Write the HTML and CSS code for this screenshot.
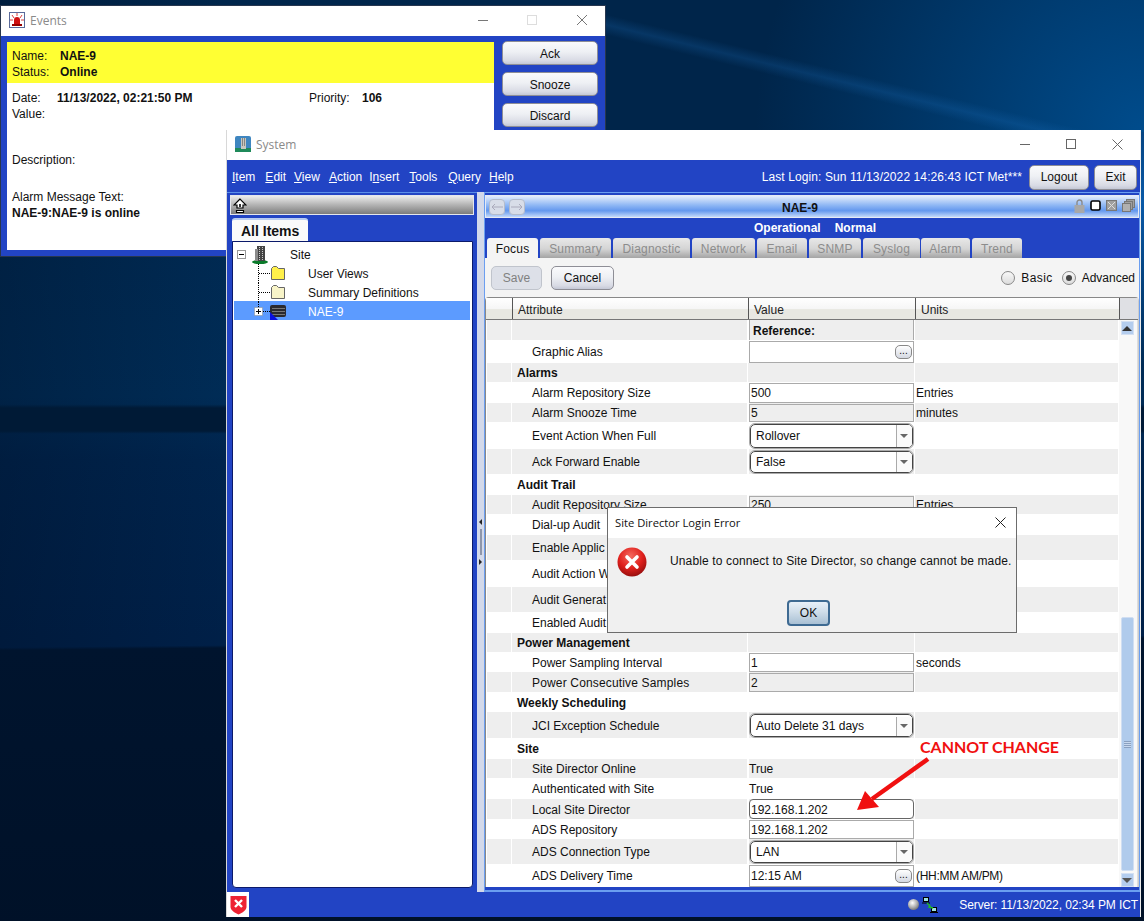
FILE: index.html
```html
<!DOCTYPE html>
<html lang="en">
<head>
    <meta charset="UTF-8">
    <title>Events / System</title>
    <link rel="stylesheet" href="styles.css">
</head>
<body>
<div class="desktop">

    <!-- Events window -->
    <div class="window events">
        <div class="titlebar">
            <svg class="title-icon" width="16" height="16" viewBox="0 0 16 16">
                <rect x="0.5" y="0.5" width="15" height="15" fill="#fff" stroke="#5a6a9a"/>
                <path d="M8 1v3M3 3l2 3M13 3l-2 3M1 8h3M15 8h-3" stroke="#d84040" stroke-width="1"/>
                <path d="M5 13V8a3 3 0 0 1 6 0v5z" fill="#d01010"/>
                <rect x="3" y="12" width="10" height="2" fill="#900"/>
            </svg>
            <span class="title-text">Events</span>
            <div class="win-controls ev-controls">
                <svg width="10" height="10" viewBox="0 0 10 10"><path d="M0 5.5h10" stroke="#777"/></svg>
                <svg width="10" height="10" viewBox="0 0 10 10"><rect x="0.5" y="0.5" width="9" height="9" fill="none" stroke="#ddd"/></svg>
                <svg width="12" height="12" viewBox="0 0 12 12"><path d="M1 1l10 10M11 1L1 11" stroke="#777"/></svg>
            </div>
        </div>
        <div class="events-body">
            <div class="event-info">
                <div class="event-head">
                    <div class="ev-line"><span class="ev-label">Name:</span><b>NAE-9</b></div>
                    <div class="ev-line"><span class="ev-label">Status:</span><b>Online</b></div>
                </div>
                <div class="event-detail">
                    <div class="ev-line">
                        <span class="ev-date-label">Date:</span><b class="ev-date">11/13/2022, 02:21:50 PM</b><span class="ev-prio-label">Priority:</span><b>106</b>
                    </div>
                    <div class="ev-line">Value:</div>
                    <div class="ev-line ev-desc">Description:</div>
                    <div class="ev-line ev-msg">Alarm Message Text:</div>
                    <div class="ev-line"><b>NAE-9:NAE-9 is online</b></div>
                </div>
            </div>
            <div class="event-actions">
                <button class="jbtn ev-btn">Ack</button>
                <button class="jbtn ev-btn">Snooze</button>
                <button class="jbtn ev-btn">Discard</button>
            </div>
        </div>
    </div>

    <!-- System window -->
    <div class="window system">
        <div class="titlebar">
            <svg class="title-icon" width="16" height="16" viewBox="0 0 16 16">
                <rect width="16" height="16" rx="2" fill="#3f86c0"/>
                <rect y="12" width="16" height="4" fill="#1f8a5a"/>
                <rect x="6" y="2" width="5" height="11" fill="#c8c8c0"/>
                <path d="M7 3h1M9 3h1M7 5h1M9 5h1M7 7h1M9 7h1M7 9h1M9 9h1" stroke="#444"/>
            </svg>
            <span class="title-text">System</span>
            <div class="win-controls sys-controls">
                <svg width="10" height="10" viewBox="0 0 10 10"><path d="M0 5.5h10" stroke="#666"/></svg>
                <svg width="10" height="10" viewBox="0 0 10 10"><rect x="0.5" y="0.5" width="9" height="9" fill="none" stroke="#666"/></svg>
                <svg width="11" height="11" viewBox="0 0 11 11"><path d="M0.5 0.5l10 10M10.5 0.5l-10 10" stroke="#666"/></svg>
            </div>
        </div>

        <div class="menubar">
            <span class="menu m-item"><u>I</u>tem</span>
            <span class="menu m-edit"><u>E</u>dit</span>
            <span class="menu"><u>V</u>iew</span>
            <span class="menu m-action"><u>A</u>ction</span>
            <span class="menu m-insert">I<u>n</u>sert</span>
            <span class="menu m-tools"><u>T</u>ools</span>
            <span class="menu m-query"><u>Q</u>uery</span>
            <span class="menu"><u>H</u>elp</span>
            <span class="last-login">Last Login: Sun 11/13/2022 14:26:43 ICT Met***</span>
            <button class="jbtn logout-btn">Logout</button>
            <button class="jbtn exit-btn">Exit</button>
        </div>

        <div class="sys-main">
            <div class="left-pane">
                <div class="nav-bar">
                    <svg width="14" height="15" viewBox="0 0 14 15"><path d="M7 1L1 7h3v3h6V7h3zM3.5 12.5h7v2h-7z" fill="#fff" stroke="#000" stroke-width="1.2"/><path d="M6 6h2v3H6z" fill="#333"/></svg>
                </div>
                <div class="tree-tab">All Items</div>
                <div class="tree">
                    <div class="tree-row">
                        <svg class="tree-icons" width="56" height="19" viewBox="0 0 56 19">
                            <rect x="3.5" y="5.5" width="8" height="8" fill="#fff" stroke="#999"/>
                            <path d="M5 9.5h5" stroke="#000"/>
                            <ellipse cx="26" cy="17" rx="8" ry="2.2" fill="#0a7a2a"/>
                            <rect x="23" y="1" width="8" height="15" fill="#444"/>
                            <rect x="21" y="4" width="3" height="12" fill="#8a8a8a"/>
                            <path d="M25.5 2v13M28.5 2v13" stroke="#ccc" stroke-dasharray="1 1"/>
                        </svg>
                        <span>Site</span>
                    </div>
                    <div class="tree-row">
                        <svg class="tree-icons" width="74" height="19" viewBox="0 0 74 19">
                            <path d="M24.5 0v19M25 9.5h11" stroke="#000" stroke-dasharray="1 1"/>
                            <path d="M37.5 15.5v-11l2-2h3l2 2h6v11z" fill="#fff04a" stroke="#666"/>
                        </svg>
                        <span>User Views</span>
                    </div>
                    <div class="tree-row">
                        <svg class="tree-icons" width="74" height="19" viewBox="0 0 74 19">
                            <path d="M24.5 0v19M25 9.5h11" stroke="#000" stroke-dasharray="1 1"/>
                            <path d="M37.5 15.5v-11l2-2h3l2 2h6v11z" fill="#f8f4c8" stroke="#666"/>
                        </svg>
                        <span>Summary Definitions</span>
                    </div>
                    <div class="tree-row selected">
                        <svg class="tree-icons" width="74" height="19" viewBox="0 0 74 19">
                            <path d="M24.5 0v5M29 9.5h7" stroke="#000" stroke-dasharray="1 1"/>
                            <rect x="20.5" y="5.5" width="8" height="8" fill="#fff" stroke="#888" stroke-dasharray="1 1"/>
                            <path d="M22 9.5h5M24.5 7v5" stroke="#000"/>
                            <rect x="36" y="3" width="16" height="12" rx="2" fill="#2a2a30"/>
                            <path d="M38 6.5h13M38 9.5h13M38 12.5h13" stroke="#777"/>
                            <path d="M36 10l8 8h-8z" fill="#0a10e0"/>
                        </svg>
                        <span>NAE-9</span>
                    </div>
                </div>
            </div>

            <div class="splitter">
                <span class="split-arrow up"></span>
                <span class="split-bar"></span>
                <span class="split-arrow down"></span>
            </div>

            <div class="right-pane">
                <div class="frame-title">
                    <span class="nav-btn">
                        <svg width="12" height="8" viewBox="0 0 12 8"><path d="M12 4H1M4 1L1 4l3 3" fill="none" stroke="#aab"/></svg>
                    </span>
                    <span class="nav-btn">
                        <svg width="12" height="8" viewBox="0 0 12 8"><path d="M0 4h11M8 1l3 3-3 3" fill="none" stroke="#aab"/></svg>
                    </span>
                    <b class="frame-name">NAE-9</b>
                    <div class="frame-icons">
                        <svg width="11" height="14" viewBox="0 0 11 14"><path d="M3 6V3.5a2.5 2.5 0 0 1 5 0V6" fill="none" stroke="#8a8a8a" stroke-width="1.4"/><rect x="0.5" y="6" width="10" height="8" fill="#a8a8a8"/></svg>
                        <svg width="11" height="11" viewBox="0 0 11 11"><rect x="1" y="1" width="9" height="9" rx="1.5" fill="#fff" stroke="#000" stroke-width="1.6"/></svg>
                        <svg width="11" height="11" viewBox="0 0 11 11"><rect x="0.5" y="0.5" width="10" height="10" fill="#a0a0a0" stroke="#777"/><path d="M2 2l7 7M9 2l-7 7" stroke="#ddd"/></svg>
                        <svg width="13" height="13" viewBox="0 0 13 13"><rect x="4.5" y="0.5" width="8" height="8" fill="#a0a0a0" stroke="#777"/><rect x="2.5" y="2.5" width="8" height="8" fill="#a0a0a0" stroke="#777"/><rect x="0.5" y="4.5" width="8" height="8" fill="#b0b0b0" stroke="#777"/></svg>
                    </div>
                </div>
                <div class="status-line"><b class="op-state">Operational</b><b>Normal</b></div>
                <div class="tabs">
                    <span class="tab active tab-focus">Focus</span>
                    <span class="tab tab-summary">Summary</span>
                    <span class="tab tab-diag">Diagnostic</span>
                    <span class="tab tab-net">Network</span>
                    <span class="tab tab-email">Email</span>
                    <span class="tab tab-snmp">SNMP</span>
                    <span class="tab tab-syslog">Syslog</span>
                    <span class="tab tab-alarm">Alarm</span>
                    <span class="tab tab-trend">Trend</span>
                </div>

                <div class="panel">
                    <div class="actions">
                        <button class="jbtn save-btn" disabled>Save</button>
                        <button class="jbtn cancel-btn">Cancel</button>
                        <label class="radio radio-basic"><span class="radio-dot"></span>Basic</label>
                        <label class="radio"><span class="radio-dot checked"></span>Advanced</label>
                    </div>

                    <div class="table">
                        <div class="thead">
                            <div class="th th-0"></div>
                            <div class="th th-1">Attribute</div>
                            <div class="th th-2">Value</div>
                            <div class="th th-3">Units</div>
                            <div class="th th-4"></div>
                        </div>
                        <div class="tbody">
                            <div class="rows">
                                <div class="row alt r20"><div></div><div></div><div class="cell-val"><div class="field ref">Reference:</div></div><div></div></div>
                                <div class="row r23"><div></div><div class="attr">Graphic Alias</div><div class="cell-val"><div class="field">&nbsp;<span class="more">...</span></div></div><div></div></div>
                                <div class="row alt r19"><div></div><div class="sect">Alarms</div><div></div><div></div></div>
                                <div class="row r21"><div></div><div class="attr">Alarm Repository Size</div><div class="cell-val"><div class="field">500</div></div><div class="unit">Entries</div></div>
                                <div class="row alt r19"><div></div><div class="attr">Alarm Snooze Time</div><div class="cell-val"><div class="field off">5</div></div><div class="unit">minutes</div></div>
                                <div class="row r27"><div></div><div class="attr">Event Action When Full</div><div class="cell-val"><div class="select">Rollover<span class="select-btn"></span></div></div><div></div></div>
                                <div class="row alt r25"><div></div><div class="attr">Ack Forward Enable</div><div class="cell-val"><div class="select">False<span class="select-btn"></span></div></div><div></div></div>
                                <div class="row r21"><div></div><div class="sect">Audit Trail</div><div></div><div></div></div>
                                <div class="row alt r19"><div></div><div class="attr">Audit Repository Size</div><div class="cell-val"><div class="field off">250</div></div><div class="unit">Entries</div></div>
                                <div class="row r21"><div></div><div class="attr">Dial-up Audit</div><div></div><div></div></div>
                                <div class="row alt r25"><div></div><div class="attr">Enable Applic</div><div></div><div></div></div>
                                <div class="row r27"><div></div><div class="attr">Audit Action W</div><div></div><div></div></div>
                                <div class="row alt r25"><div></div><div class="attr">Audit Generat</div><div></div><div></div></div>
                                <div class="row r21"><div></div><div class="attr">Enabled Audit</div><div></div><div></div></div>
                                <div class="row alt r19"><div></div><div class="sect">Power Management</div><div></div><div></div></div>
                                <div class="row r20"><div></div><div class="attr">Power Sampling Interval</div><div class="cell-val"><div class="field">1</div></div><div class="unit">seconds</div></div>
                                <div class="row alt r20"><div></div><div class="attr wide">Power Consecutive Samples</div><div class="cell-val"><div class="field off">2</div></div><div></div></div>
                                <div class="row r20"><div></div><div class="sect">Weekly Scheduling</div><div></div><div></div></div>
                                <div class="row alt r26"><div></div><div class="attr">JCI Exception Schedule</div><div class="cell-val"><div class="select">Auto Delete 31 days<span class="select-btn"></span></div></div><div></div></div>
                                <div class="row r21"><div></div><div class="sect">Site</div><div></div><div></div></div>
                                <div class="row alt r19"><div></div><div class="attr">Site Director Online</div><div class="cell-val plain">True</div><div></div></div>
                                <div class="row r21"><div></div><div class="attr">Authenticated with Site</div><div class="cell-val plain">True</div><div></div></div>
                                <div class="row alt r20"><div></div><div class="attr">Local Site Director</div><div class="cell-val"><div class="field focus">192.168.1.202</div></div><div></div></div>
                                <div class="row r20"><div></div><div class="attr">ADS Repository</div><div class="cell-val"><div class="field">192.168.1.202</div></div><div></div></div>
                                <div class="row alt r25"><div></div><div class="attr">ADS Connection Type</div><div class="cell-val"><div class="select">LAN<span class="select-btn"></span></div></div><div></div></div>
                                <div class="row r23"><div></div><div class="attr">ADS Delivery Time</div><div class="cell-val"><div class="field">12:15 AM<span class="more">...</span></div></div><div class="unit time-hint">(HH:MM AM/PM)</div></div>
                            </div>
                            <div class="scrollbar">
                                <span class="sb-btn"><span class="tri-up"></span></span>
                                <div class="sb-track">
                                    <div class="sb-thumb"><span class="grip"></span></div>
                                </div>
                                <span class="sb-btn"><span class="tri-down"></span></span>
                            </div>
                        </div>
                    </div>
                </div>
            </div>
        </div>

        <div class="statusbar">
            <span class="shield-box">
                <svg width="17" height="20" viewBox="0 0 17 20">
                    <path d="M0.5 1h16v11c0 3-4 6-8 7.5C4.5 18 0.5 15 0.5 12z" fill="#ee2233"/>
                    <path d="M5 5l7 7M12 5l-7 7" stroke="#fff" stroke-width="2.4"/>
                </svg>
            </span>
            <span class="orb"></span>
            <svg class="net-icon" width="16" height="16" viewBox="0 0 16 16">
                <rect x="1.5" y="0.5" width="5" height="4" fill="#9fe0e0" stroke="#000"/>
                <path d="M0 6h8" stroke="#000"/>
                <rect x="9.5" y="10.5" width="5" height="4" fill="#9fe0e0" stroke="#000"/>
                <path d="M8 15.5h8" stroke="#000"/>
                <path d="M5 6l3 3-1 1 4 1" fill="none" stroke="#20c020" stroke-width="1.4"/>
            </svg>
            <span class="server-time">Server: 11/13/2022, 02:34 PM ICT</span>
        </div>
    </div>

    <!-- Error dialog over the system window -->
    <div class="window dialog">
        <div class="dialog-title">
            <span>Site Director Login Error</span>
            <svg width="11" height="11" viewBox="0 0 11 11"><path d="M0.5 0.5l10 10M10.5 0.5l-10 10" stroke="#222"/></svg>
        </div>
        <div class="dialog-body">
            <div class="dialog-msg">
                <svg width="30" height="30" viewBox="0 0 30 30">
                    <defs>
                        <radialGradient id="errorBall" cx="45%" cy="30%" r="75%">
                            <stop offset="0" stop-color="#f46a60"/>
                            <stop offset="0.55" stop-color="#e0201c"/>
                            <stop offset="1" stop-color="#8c0c0c"/>
                        </radialGradient>
                    </defs>
                    <circle cx="15" cy="15" r="14.5" fill="url(#errorBall)"/>
                    <path d="M10 10l10 10M20 10L10 20" stroke="#fff" stroke-width="3.6" stroke-linecap="round"/>
                </svg>
                <span class="dialog-text">Unable to connect to Site Director, so change cannot be made.</span>
            </div>
            <button class="ok-btn">OK</button>
        </div>
    </div>

    <!-- Red note drawn on top of the screenshot -->
    <div class="note">CANNOT CHANGE</div>
    <svg class="note-arrow" width="84" height="62" viewBox="0 0 84 62">
        <path d="M73 3L17 43" stroke="#f01010" stroke-width="4.5"/>
        <path d="M2 54L24 51 10 35z" fill="#f01010"/>
    </svg>
</div>
</body>
</html>
```

FILE: styles.css
```css
* {
    margin: 0;
    padding: 0;
    box-sizing: border-box;
}

body {
    font-family: "Liberation Sans", Arial, sans-serif;
    font-size: 12px;
    color: #111;
    overflow: hidden;
}

.desktop {
    position: relative;
    width: 1144px;
    height: 921px;
    overflow: hidden;
    background:
        linear-gradient(179.4deg, transparent 69.4%, #00142e 69.7%, #001128 100%),
        linear-gradient(180deg, transparent 43.9%, #001a36 44.3%, #001a36 46.8%, transparent 47.1%),
        radial-gradient(circle at 100% 22%, #0a5aa8 0, transparent 12%),
        linear-gradient(90deg, rgba(0, 12, 32, 0.3) 0, transparent 20%),
        linear-gradient(180deg, #00264c 0, #002c56 43%, #00244d 50%, #002048 69%);
}

.desktop::before {
    content: "";
    position: absolute;
    left: 605px;
    top: 0;
    width: 539px;
    height: 132px;
    background:
        linear-gradient(193.6deg, transparent 55%, rgba(30, 115, 195, 0.22) 59%, transparent 63%),
        radial-gradient(circle at 100% 100%, #004c8c, transparent 70%),
        #00254a;
}

.window {
    position: absolute;
}

.titlebar {
    height: 30px;
    padding-bottom: 2px;
    background: #fff;
    display: flex;
    align-items: center;
    flex-shrink: 0;
}

.title-icon {
    margin-left: 8px;
}

.title-text {
    font-family: "Open Sans", sans-serif;
    color: #8a8a8a;
    font-size: 12px;
    margin-left: 5px;
}

.win-controls {
    margin-left: auto;
    display: flex;
    align-items: center;
}

.jbtn {
    font-family: "Liberation Sans", Arial, sans-serif;
    font-size: 12px;
    color: #111;
    border: 1px solid #8e8e96;
    border-radius: 5px;
    background: linear-gradient(#fafafc 0, #eef0f4 45%, #d8dae4 85%, #c4c8d6 100%);
}

/* Events window */
.events {
    left: 1px;
    top: 6px;
    width: 604px;
    height: 250px;
    background: #2244c4;
    box-shadow: 0 0 0 1px rgba(50, 60, 80, 0.8);
}

.ev-controls {
    gap: 39px;
    padding-right: 17px;
}

.events-body {
    display: flex;
    padding: 6px 0 6px 6px;
    height: 220px;
}

.event-info {
    width: 487px;
    background: #fff;
}

.event-head {
    height: 41px;
    background: #ffff33;
    padding: 6px 5px 0;
}

.ev-line {
    height: 16px;
    line-height: 16px;
    white-space: nowrap;
}

.ev-label {
    display: inline-block;
    width: 48px;
}

.event-detail {
    padding: 7px 5px 0;
}

.ev-date-label {
    display: inline-block;
    width: 45px;
}

.ev-date {
    display: inline-block;
    width: 252px;
}

.ev-prio-label {
    display: inline-block;
    width: 53px;
}

.ev-desc {
    margin-top: 30px;
}

.ev-msg {
    margin-top: 21px;
}

.event-actions {
    display: flex;
    flex-direction: column;
    gap: 7px;
    margin: -1px 0 0 8px;
}

.ev-btn {
    width: 96px;
    height: 24px;
    padding-top: 2px;
}

/* System window */
.system {
    left: 226px;
    top: 130px;
    width: 915px;
    height: 787px;
    border-left: 1px solid #d8d8d8;
    border-right: 1px solid #eee;
    background: #2244c4;
    display: flex;
    flex-direction: column;
}

.sys-controls {
    gap: 36px;
    padding-right: 17px;
}

.menubar {
    height: 32px;
    display: flex;
    align-items: center;
    background: #2244c4;
    color: #fff;
    padding: 2px 3px 0 5px;
    flex-shrink: 0;
}

.menu {
    margin-right: 9px;
}

.m-item { margin-right: 10px; }
.m-edit { margin-right: 8px; }
.m-action { margin-right: 7px; }
.m-insert { margin-right: 10px; }
.m-tools { margin-right: 11px; }
.m-query { margin-right: 8px; }

.last-login {
    margin-left: auto;
    margin-right: 7px;
    letter-spacing: 0.1px;
}

.logout-btn {
    width: 60px;
    height: 25px;
    margin-right: 5px;
}

.exit-btn {
    width: 43px;
    height: 25px;
}

.sys-main {
    display: flex;
    height: 700px;
}

.left-pane {
    width: 250px;
    padding: 3px 4px 0 3px;
    background: #2244c4;
    border-top: 1px solid #5b8fe8;
}

.nav-bar {
    height: 20px;
    margin-top: -1px;
    width: 244px;
    border: 1px solid #e4e6ec;
    background: linear-gradient(#ececec 0, #b8b8b8 45%, #7c7c7c 100%);
    padding: 2px 0 0 2px;
    display: flex;
    align-items: flex-start;
}

.tree-tab {
    width: 76px;
    height: 23px;
    margin: 3px 0 0 2px;
    background: #fafafa;
    border-top: 2px solid #b8ccf0;
    border-radius: 3px 3px 0 0;
    font-size: 14px;
    font-weight: bold;
    line-height: 23px;
    padding-left: 9px;
}

.tree {
    height: 647px;
    width: 241px;
    margin-left: 2px;
    background: #fff;
    border: 1px solid #0b1a6a;
    border-radius: 0 0 4px 4px;
    padding: 2px 2px 0 1px;
}

.tree-row {
    height: 19px;
    display: flex;
    align-items: center;
}

.tree-row span {
    padding-top: 2px;
}

.tree-row.selected {
    background: #5c9bff;
    color: #fff;
}

.tree-icons {
    flex-shrink: 0;
    margin-top: 2px;
}

.splitter {
    width: 7px;
    background: #d3d9ea;
    display: flex;
    flex-direction: column;
    align-items: center;
    justify-content: center;
    gap: 4px;
}

.split-bar {
    width: 2px;
    height: 26px;
    background: #8e96aa;
}

.split-arrow {
    width: 0;
    height: 0;
    border-top: 3px solid transparent;
    border-bottom: 3px solid transparent;
}

.split-arrow.up {
    border-right: 3px solid #222;
}

.split-arrow.down {
    border-left: 3px solid #222;
}

.right-pane {
    width: 656px;
    background: #2244c4;
    border: 1px solid #6b9ef0;
    border-bottom-width: 2px;
    display: flex;
    flex-direction: column;
}

.frame-title {
    height: 23px;
    margin-top: 2px;
    border: 1px solid #e6eaf4;
    background: linear-gradient(#e4edfc 0, #8db6f4 45%, #6498ee 70%, #c4dafa 100%);
    display: flex;
    align-items: center;
    padding-left: 3px;
    flex-shrink: 0;
}

.nav-btn {
    width: 16px;
    height: 16px;
    margin-right: 4px;
    border-radius: 4px;
    background: #d8dde8;
    border: 1px solid #b4bccc;
    display: flex;
    align-items: center;
    justify-content: center;
}

.frame-name {
    margin: 2px 0 0 253px;
}

.frame-icons {
    margin-left: auto;
    display: flex;
    align-items: center;
    gap: 5px;
    padding: 0 3px 2px 0;
}

.status-line {
    height: 20px;
    color: #fff;
    padding-left: 269px;
    line-height: 20px;
    flex-shrink: 0;
}

.op-state {
    margin-right: 14px;
}

.tabs {
    height: 20px;
    display: flex;
    padding-left: 2px;
    flex-shrink: 0;
}

.tab {
    height: 20px;
    margin-right: 2px;
    border-radius: 3px 3px 0 0;
    background: linear-gradient(#e8e8e8 0, #d4d4d4 55%, #a4a4a4 100%);
    color: #8c8c8c;
    text-align: center;
    line-height: 22px;
    letter-spacing: 0.2px;
}

.tab.active {
    background: #f4f4f4;
    color: #111;
}

.tab-focus { width: 51px; }
.tab-summary { width: 71px; }
.tab-diag { width: 77px; }
.tab-net { width: 63px; }
.tab-email { width: 50px; }
.tab-snmp { width: 52px; }
.tab-syslog { width: 57px; margin-right: 1px; }
.tab-alarm { width: 49px; }
.tab-trend { width: 50px; }

.panel {
    height: 629px;
    background: #f4f4f4;
    flex-shrink: 0;
}

.actions {
    height: 39px;
    display: flex;
    align-items: center;
    padding: 0 4px 0 6px;
}

.save-btn {
    width: 51px;
    height: 24px;
    color: #808080;
    background: #dde0e8;
    border-color: #c0c4cc;
}

.cancel-btn {
    width: 63px;
    height: 24px;
    margin-left: 9px;
}

.radio {
    display: flex;
    align-items: center;
    margin-left: 9px;
}

.radio-basic {
    margin-left: auto;
    letter-spacing: 0.4px;
}

.radio-dot {
    width: 14px;
    height: 14px;
    border-radius: 50%;
    border: 1px solid #888;
    background: linear-gradient(#f8f8f8, #dcdcdc);
    margin-right: 6px;
    position: relative;
}

.radio-dot.checked::after {
    content: "";
    position: absolute;
    left: 3px;
    top: 3px;
    width: 6px;
    height: 6px;
    border-radius: 50%;
    background: #444;
}

.table {
    height: 590px;
    width: 654px;
    border-top: 1px solid #888;
    border-left: 1px solid #888;
    border-right: 1px solid #ccc;
    border-radius: 4px 4px 0 0;
    background: #fff;
}

.thead {
    height: 22px;
    display: flex;
    padding-left: 2px;
    background: linear-gradient(#ffffff 0, #f6f6f6 50%, #e8e8e2 55%, #e8e8e2 100%);
    border-bottom: 1px solid #777;
    color: #222;
    line-height: 24px;
}

.th {
    border-right: 1px solid #555;
    padding-left: 5px;
}

.th-0 { width: 25px; }
.th-1 { width: 236px; }
.th-2 { width: 167px; }
.th-3 { width: 204px; }
.th-4 { width: 18px; border-right: 0; background: #dfe0e4; }

.tbody {
    display: flex;
    padding-left: 1px;
}

.rows {
    width: 632px;
}

.row {
    display: grid;
    grid-template-columns: 25px 236px 167px 204px;
    background: #fff;
}

.row.alt > div {
    background: #eeeeee;
}

.row > div {
    display: flex;
    align-items: center;
    border-right: 1px solid #fff;
    min-width: 0;
    white-space: nowrap;
}

.r19 { height: 19px; }
.r20 { height: 20px; }
.r21 { height: 21px; }
.r23 { height: 23px; }
.r25 { height: 25px; }
.r26 { height: 26px; }
.r27 { height: 27px; }

/* even-height rows sit one pixel lower in the original */
.r20 .attr,
.r20 .sect,
.r20 .unit,
.r20 .field,
.r26 .attr {
    padding-top: 2px;
}

.sect {
    font-weight: bold;
    padding-left: 5px;
}

.attr {
    padding-left: 20px;
}

.attr.wide {
    letter-spacing: 0.16px;
}

.row > .cell-val {
    border-left: 1px solid #fff;
}

.unit {
    padding-left: 1px;
}

.time-hint {
    letter-spacing: -0.3px;
}

.field {
    width: 100%;
    height: calc(100% - 1px);
    border: 1px solid #aaa;
    background: #fff;
    padding-left: 1px;
    display: flex;
    align-items: center;
}

.field.off {
    background: #eeeeee;
}

.field.ref {
    background: #eeeeee;
    border-top: 0;
    border-bottom: 0;
    font-weight: bold;
    padding-left: 3px;
    height: 100%;
}

.field.focus {
    border: 1px solid #666;
    border-radius: 4px;
    height: 100%;
}

.more {
    margin-left: auto;
    margin-right: 1px;
    width: 17px;
    height: 14px;
    border: 1px solid #888;
    border-radius: 5px;
    background: linear-gradient(#fff, #d4d8e2);
    font-size: 10px;
    line-height: 10px;
    text-align: center;
}

.select {
    width: 100%;
    height: calc(100% - 3px);
    border: 1px solid #444;
    border-radius: 5px;
    outline: 1px solid #aaa;
    background: #fff;
    margin: 0 1px;
    padding-left: 5px;
    display: flex;
    align-items: center;
    overflow: hidden;
}

.r26 .select {
    padding-top: 2px;
}

.select-btn {
    margin-left: auto;
    width: 16px;
    height: 100%;
    border-left: 1px solid #aaa;
    position: relative;
    background: #fafafa;
}

.select-btn::after {
    content: "";
    position: absolute;
    left: 3px;
    top: calc(50% - 2px);
    border-left: 4px solid transparent;
    border-right: 4px solid transparent;
    border-top: 4px solid #666;
}

.scrollbar {
    width: 19px;
    height: 567px;
    display: flex;
    flex-direction: column;
    align-items: center;
    background: #f8f8f8;
    padding: 1px 2px 0 0;
    border-right: 1px solid #ddd;
}

.sb-btn {
    width: 13px;
    height: 14px;
    flex-shrink: 0;
    background: #b4cdee;
    border: 1px solid #d4e0f2;
    display: flex;
    align-items: center;
    justify-content: center;
}

.tri-up {
    border-left: 5px solid transparent;
    border-right: 5px solid transparent;
    border-bottom: 5px solid #333;
}

.tri-down {
    border-left: 5px solid transparent;
    border-right: 5px solid transparent;
    border-top: 5px solid #555;
}

.sb-track {
    flex: 1;
    display: flex;
    flex-direction: column;
    justify-content: flex-end;
    padding-bottom: 2px;
}

.sb-thumb {
    width: 13px;
    height: 254px;
    background: #b0cbec;
    border: 1px solid #d0def2;
    border-radius: 2px;
    display: flex;
    align-items: center;
    justify-content: center;
}

.grip {
    width: 7px;
    height: 7px;
    background: repeating-linear-gradient(#8aa0c0 0, #8aa0c0 1px, #c8d8ee 1px, #c8d8ee 2px);
}

.statusbar {
    height: 25px;
    display: flex;
    align-items: center;
    color: #fff;
    background: #2244c4;
}

.shield-box {
    width: 22px;
    height: 25px;
    background: #fff;
    display: flex;
    align-items: center;
    justify-content: center;
}

.orb {
    margin-left: auto;
    width: 11px;
    height: 11px;
    border-radius: 50%;
    background: radial-gradient(circle at 40% 35%, #fff 0, #aaa 50%, #444 100%);
}

.net-icon {
    margin-left: 3px;
}

.server-time {
    margin-left: 21px;
    margin-right: 2px;
    letter-spacing: -0.1px;
}

/* Error dialog */
.dialog {
    left: 607px;
    top: 507px;
    width: 410px;
    height: 126px;
    border: 1px solid #6c6c6c;
    background: #f0f0f0;
}

.dialog-title {
    height: 30px;
    background: #fff;
    font-family: "Open Sans", sans-serif;
    font-size: 11.2px;
    display: flex;
    align-items: center;
    justify-content: space-between;
    padding: 0 10px 2px 7px;
}

.dialog-body {
    display: flex;
    flex-direction: column;
    align-items: center;
}

.dialog-msg {
    width: 100%;
    display: flex;
    align-items: center;
    padding: 9px 0 0 9px;
}

.dialog-text {
    margin: -2px 0 0 23px;
    white-space: nowrap;
    letter-spacing: 0.13px;
}

.ok-btn {
    width: 43px;
    height: 26px;
    margin: 23px 7px 0 0;
    border: 2px solid #3e6a92;
    border-radius: 4px;
    font-family: "Liberation Sans", Arial, sans-serif;
    font-size: 12px;
    color: #111;
    background: linear-gradient(#e8f0f8 0, #cfdde9 45%, #a9c0d4 100%);
}

/* Red annotation */
.note {
    position: absolute;
    left: 920px;
    top: 737px;
    font-family: Lato, sans-serif;
    font-size: 16px;
    line-height: 20px;
    font-weight: bold;
    color: #f01010;
    white-space: nowrap;
}

.note-arrow {
    position: absolute;
    left: 855px;
    top: 756px;
}
```
